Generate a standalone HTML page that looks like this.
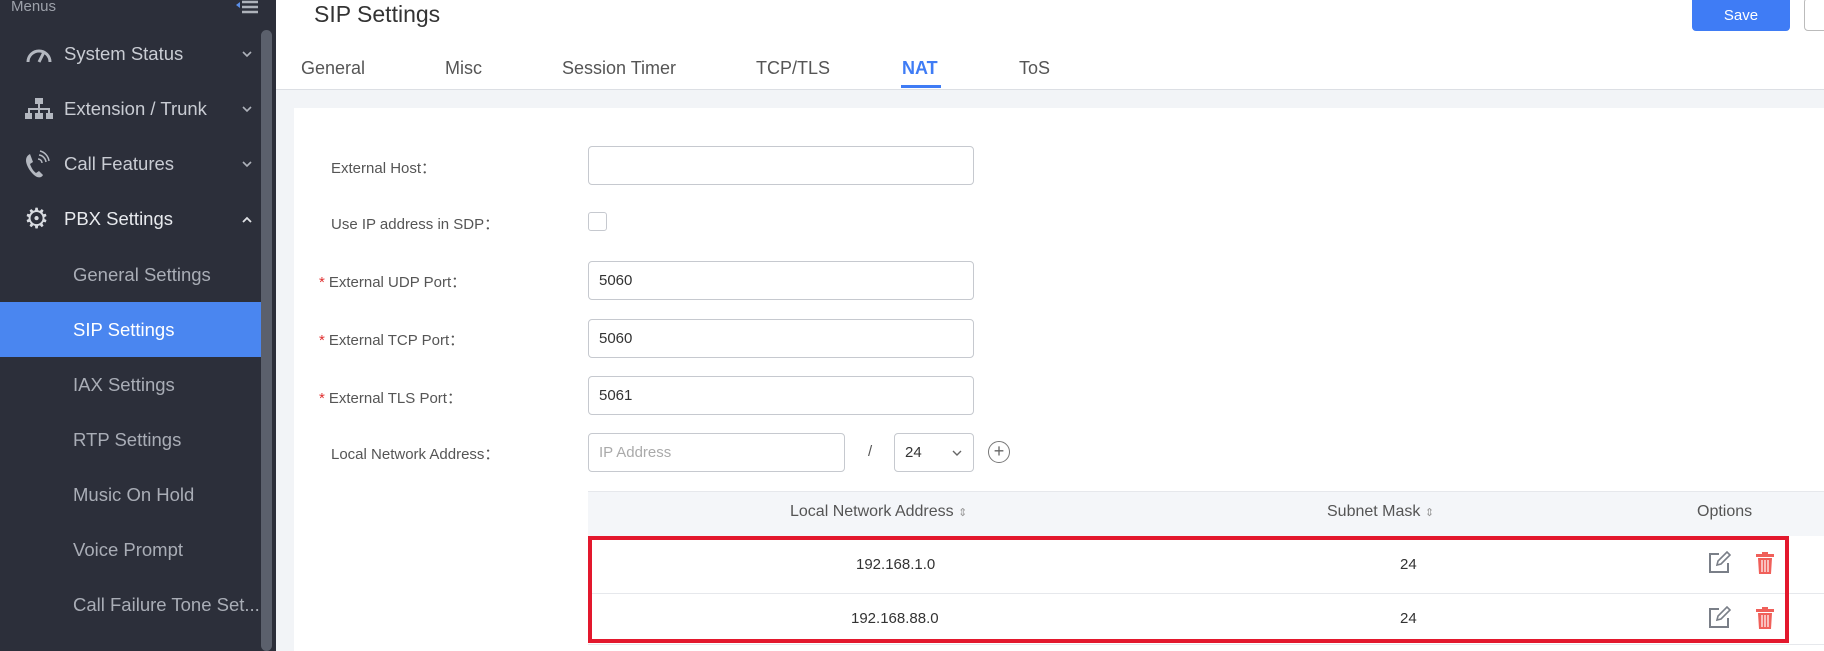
<!DOCTYPE html>
<html><head><meta charset="utf-8"><style>
*{box-sizing:border-box;margin:0;padding:0}
body{width:1824px;height:651px;overflow:hidden;background:#fff;font-family:"Liberation Sans",sans-serif;position:relative;color:#333}
.sb{position:absolute;left:0;top:0;width:276px;height:651px;background:#2c2f3a}
.sb .t{position:absolute;color:#c9ccd3;font-size:18.5px;white-space:nowrap}
.sb .sub{color:#a9adb6;left:73px}
.scroll{position:absolute;left:261px;top:30px;width:11px;height:621px;background:#5b606c;border-radius:6px}
.hl{position:absolute;left:0;top:302px;width:261px;height:55px;background:#4a86f0}
.chev{position:absolute;left:242px}
.a{position:absolute;white-space:nowrap}
.lbl{position:absolute;left:331px;font-size:15px;color:#555}
.req{color:#e03030;margin-left:-12px;margin-right:4px}
.inp{position:absolute;border:1px solid #c6c9cf;border-radius:4px;height:39px;background:#fff;font-size:15px;padding:10px 10px;color:#333}
.tabs span{position:absolute;top:58px;font-size:18px;color:#555}
</style></head><body>
<div class="sb">
<div class="t" style="left:11px;top:-2px;font-size:15px;color:#9da1aa">Menus</div>
<svg class="a" style="left:236px;top:0" width="22" height="16" viewBox="0 0 22 16"><path d="M0 5l4-3v6z" fill="#5b8fe8"/><path d="M6 2h16M6 7h16M6 12h16" stroke="#aeb2ba" stroke-width="2.5"/></svg>
<div class="scroll"></div>
<div class="hl"></div>
<svg class="a" style="left:25px;top:44px" width="28" height="20" viewBox="0 0 28 20"><path d="M3 18 A11 11 0 0 1 25 18" fill="none" stroke="#b4b8c0" stroke-width="3"/><path d="M14 18 L19 8" stroke="#b4b8c0" stroke-width="3"/></svg>
<div class="t" style="left:64px;top:43px">System Status</div>
<svg class="chev" style="top:51px" width="10" height="7" viewBox="0 0 10 7"><path d="M1 1l4 4 4-4" fill="none" stroke="#aeb2ba" stroke-width="1.6"/></svg>
<svg class="a" style="left:25px;top:98px" width="28" height="22" viewBox="0 0 28 22"><g fill="#b4b8c0"><rect x="10" y="0" width="8" height="6"/><rect x="13" y="6" width="2" height="5"/><rect x="3" y="10" width="22" height="2"/><rect x="3" y="10" width="2" height="5"/><rect x="13" y="10" width="2" height="5"/><rect x="23" y="10" width="2" height="5"/><rect x="0" y="15" width="7" height="6"/><rect x="10" y="15" width="8" height="6"/><rect x="21" y="15" width="7" height="6"/></g></svg>
<div class="t" style="left:64px;top:98px">Extension / Trunk</div>
<svg class="chev" style="top:106px" width="10" height="7" viewBox="0 0 10 7"><path d="M1 1l4 4 4-4" fill="none" stroke="#aeb2ba" stroke-width="1.6"/></svg>
<svg class="a" style="left:24px;top:150px" width="26" height="28" viewBox="0 0 26 28"><path d="M6 4c-4 2-5 6-3 11s6 10 10 12c3 1 5 0 6-2l-4-4-3 2c-3-2-5-6-6-9l3-2-3-8z" fill="#b4b8c0"/><path d="M14 9a4 4 0 0 1 4 4M15 5a8 8 0 0 1 7 7M16 1a12 12 0 0 1 9 10" fill="none" stroke="#b4b8c0" stroke-width="1.5"/></svg>
<div class="t" style="left:64px;top:153px">Call Features</div>
<svg class="chev" style="top:161px" width="10" height="7" viewBox="0 0 10 7"><path d="M1 1l4 4 4-4" fill="none" stroke="#aeb2ba" stroke-width="1.6"/></svg>
<div class="t" style="left:24px;top:202px;font-size:28px;color:#d8dbe0">⚙</div>
<div class="t" style="left:64px;top:208px;color:#e8eaee">PBX Settings</div>
<svg class="chev" style="top:216px" width="10" height="7" viewBox="0 0 10 7"><path d="M1 6l4-4 4 4" fill="none" stroke="#e0e2e6" stroke-width="1.8"/></svg>
<div class="t sub" style="top:264px">General Settings</div>
<div class="t sub" style="top:319px;color:#fff">SIP Settings</div>
<div class="t sub" style="top:374px">IAX Settings</div>
<div class="t sub" style="top:429px">RTP Settings</div>
<div class="t sub" style="top:484px">Music On Hold</div>
<div class="t sub" style="top:539px">Voice Prompt</div>
<div class="t sub" style="top:594px">Call Failure Tone Set...</div>
</div>
<div class="a" style="left:314px;top:1px;font-size:23px;color:#333">SIP Settings</div>
<div class="a" style="left:1692px;top:0;width:98px;height:31px;background:#3f7cf5;border-radius:0 0 4px 4px;color:#fff;font-size:15px;text-align:center;line-height:31px">Save</div>
<div class="a" style="left:1804px;top:-2px;width:40px;height:33px;border:1px solid #bbb;border-radius:4px"></div>
<div class="tabs"><span style="left:301px">General</span><span style="left:445px">Misc</span><span style="left:562px">Session Timer</span><span style="left:756px">TCP/TLS</span><span style="left:902px;color:#3f7cf5;font-weight:bold">NAT</span><span style="left:1019px">ToS</span></div>
<div class="a" style="left:901px;top:85px;width:40px;height:3px;background:#3f7cf5"></div>
<div class="a" style="left:276px;top:89px;width:1548px;height:562px;background:#f2f4f7;border-top:1px solid #dcdfe4"></div>
<div class="a" style="left:294px;top:108px;width:1530px;height:543px;background:#fff"></div>
<div class="lbl" style="top:157px">External Host：</div>
<div class="lbl" style="top:213px">Use IP address in SDP：</div>
<div class="lbl" style="top:271px"><span class="req">*</span>External UDP Port：</div>
<div class="lbl" style="top:329px"><span class="req">*</span>External TCP Port：</div>
<div class="lbl" style="top:387px"><span class="req">*</span>External TLS Port：</div>
<div class="lbl" style="top:443px">Local Network Address：</div>
<div class="inp" style="left:588px;top:146px;width:386px"></div>
<div class="a" style="left:588px;top:212px;width:19px;height:19px;border:1px solid #c6c9cf;border-radius:3px"></div>
<div class="inp" style="left:588px;top:261px;width:386px">5060</div>
<div class="inp" style="left:588px;top:319px;width:386px">5060</div>
<div class="inp" style="left:588px;top:376px;width:386px">5061</div>
<div class="inp" style="left:588px;top:433px;width:257px;color:#aaa">IP Address</div>
<div class="a" style="left:868px;top:443px;font-size:15px;color:#555">/</div>
<div class="inp" style="left:894px;top:433px;width:80px">24<svg style="position:absolute;right:11px;top:16px" width="10" height="7" viewBox="0 0 10 7"><path d="M1 1l4 4 4-4" fill="none" stroke="#666" stroke-width="1.4"/></svg></div>
<div class="a" style="left:988px;top:441px;width:22px;height:22px;border:1.5px solid #777;border-radius:50%;text-align:center;line-height:18px;font-size:18px;color:#666">+</div>
<div class="a" style="left:588px;top:491px;width:1236px;height:45px;background:#f4f6f9;border-top:1px solid #e6e8ec"></div>
<div class="a" style="left:790px;top:503px;font-size:16px;color:#555">Local Network Address <span style="font-size:11px;color:#999">⇕</span></div>
<div class="a" style="left:1327px;top:503px;font-size:16px;color:#555">Subnet Mask <span style="font-size:11px;color:#999">⇕</span></div>
<div class="a" style="left:1697px;top:503px;font-size:16px;color:#555">Options</div>
<div class="a" style="left:588px;top:593px;width:1236px;height:1px;background:#e6e8ec"></div>
<div class="a" style="left:588px;top:644px;width:1236px;height:1px;background:#e6e8ec"></div>
<div class="a" style="left:856px;top:556px;font-size:15px;color:#333">192.168.1.0</div>
<div class="a" style="left:1400px;top:556px;font-size:15px;color:#333">24</div>
<div class="a" style="left:851px;top:610px;font-size:15px;color:#333">192.168.88.0</div>
<div class="a" style="left:1400px;top:610px;font-size:15px;color:#333">24</div>
<svg class="a" style="left:1707px;top:551px" width="24" height="24" viewBox="0 0 24 24"><path d="M12 3H3v18h18v-9" fill="none" stroke="#7a7f88" stroke-width="2"/><path d="M10 14l1-4 9-9 3 3-9 9z" fill="none" stroke="#7a7f88" stroke-width="1.6"/></svg>
<svg class="a" style="left:1755px;top:551px" width="20" height="24" viewBox="0 0 20 24"><path d="M7 1h6v2H7z M1 3h18v3H1z M3 7h14l-1 16H4z" fill="#f0605a"/><path d="M7 9v12M10 9v12M13 9v12" stroke="#fff" stroke-width="1.2"/></svg>
<svg class="a" style="left:1707px;top:606px" width="24" height="24" viewBox="0 0 24 24"><path d="M12 3H3v18h18v-9" fill="none" stroke="#7a7f88" stroke-width="2"/><path d="M10 14l1-4 9-9 3 3-9 9z" fill="none" stroke="#7a7f88" stroke-width="1.6"/></svg>
<svg class="a" style="left:1755px;top:606px" width="20" height="24" viewBox="0 0 20 24"><path d="M7 1h6v2H7z M1 3h18v3H1z M3 7h14l-1 16H4z" fill="#f0605a"/><path d="M7 9v12M10 9v12M13 9v12" stroke="#fff" stroke-width="1.2"/></svg>
<div class="a" style="left:588px;top:536px;width:1201px;height:107px;border:4px solid #e3182d"></div>
</body></html>
